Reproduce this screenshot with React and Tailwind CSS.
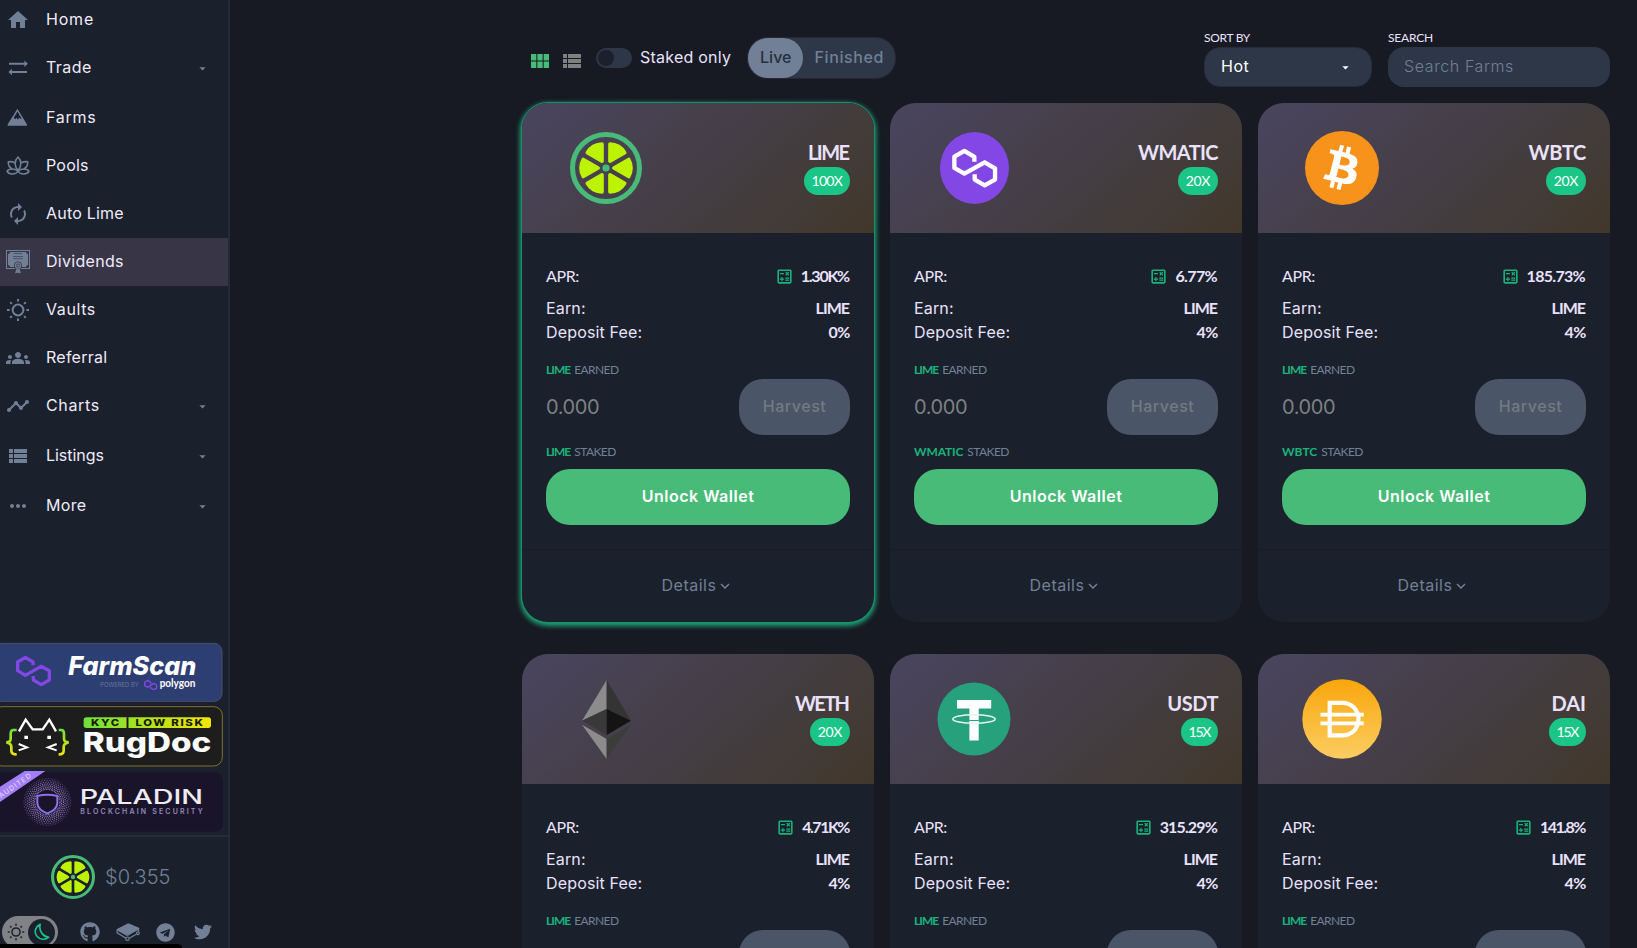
import React from 'react';
import {
  MdHome, MdAutorenew, MdGroups, MdTimeline, MdViewList, MdMoreHoriz, MdViewModule,
  MdArrowDropDown, MdOutlineCalculate, MdKeyboardArrowDown,
} from 'react-icons/md';
import { FaGithub, FaTelegram, FaTwitter, FaBitcoin } from 'react-icons/fa';

/* ---------- navigation icons ---------- */

const TradeIcon = () => (
  <svg viewBox="0 0 24 24" className="h-6 w-6" fill="currentColor">
    <path d="M3 6.700h15.400V4.400l3.500 3.300-3.500 3.300V8.700H3zM21 15.100H5.900v-2.400l-3.500 3.300 3.500 3.300v-2.300H21z" />
  </svg>
);

const FarmsIcon = () => (
  <svg viewBox="0 0 24 24" className="h-6 w-6" fill="currentColor">
    <path fillRule="evenodd" d="M11.400 2.800 21 18.400q.4 1.400-.9 1.400H2.500q-1.300 0-.9-1.400ZM11.400 5.600 7.700 12l1.500 1.300 1.300-1.500 1.300 1.700 1.500-1.700 1.600 1.300.7-.6Z" />
  </svg>
);

const PoolsIcon = () => (
  <svg viewBox="0 0 24 24" className="h-6 w-6" fill="none" stroke="currentColor" strokeWidth="1.600" strokeLinejoin="round">
    <path d="M12 3C8.300 6.500 8 12 12 16.500 16 12 15.700 6.500 12 3Z" />
    <path d="M8.700 8.800C7 7.800 4.500 7.500 2.300 7.700c-.1 3.300 1.200 5.800 3.800 7.200M15.300 8.800c1.700-1 4.200-1.300 6.400-1.100.1 3.300-1.200 5.800-3.800 7.200" />
    <path d="M12 17C9 14.300 2.800 14.200 1 17.200c2 4 9 3.600 11-.2 2 3.800 9 4.200 11 .2-1.800-3-8-2.900-11-.2Z" />
  </svg>
);

const DividendsIcon = () => (
  <svg viewBox="0 0 24 24" className="h-6 w-6">
    <rect x="0.500" y="0.500" width="23" height="18" fill="none" stroke="currentColor" />
    <path d="M4 2h16q0 2 2 2v11q-2 0-2 2H4q0-2-2-2V4q2 0 2-2Z" fill="currentColor" />
    <path d="M8 3.500h8M7 6.500h10M7 8.700h10" stroke="#383547" strokeWidth=".8" opacity=".8" />
    <circle cx="12" cy="15.500" r="4" fill="#383547" />
    <circle cx="12" cy="15.500" r="3.200" fill="currentColor" />
    <circle cx="12" cy="15.500" r="1.600" fill="none" stroke="#383547" strokeWidth=".8" />
    <path d="m10.500 18.500-1.500 5 1.700-.8 1 .8.500-4.500M13.500 18.500l1.500 5-1.700-.8-1 .8-.5-4.500" fill="currentColor" />
  </svg>
);

const SunIcon = ({ className }) => (
  <svg viewBox="0 0 24 24" className={className} fill="none" stroke="currentColor" strokeWidth="2">
    <circle cx="12" cy="12" r="5.400" />
    <path d="M12 1v2.600M12 20.400V23M1 12h2.600M20.400 12H23M4.200 4.200 5.900 5.900M18.100 18.100l1.700 1.700M4.200 19.800l1.700-1.700M18.100 5.900l1.700-1.700" />
  </svg>
);

const GitbookIcon = () => (
  <svg viewBox="0 0 24 18" className="h-[18px] w-6" fill="currentColor">
    <path d="M13 .6 23 4.700q.9.500 0 1L12.500 11.500q-1.200.6-2.400 0L1 6.900q-.7-.6 0-1L11.700.6q.6-.3 1.300 0Z" />
    <path
      d="M1.200 6.800v3.100L10 15.200M13.400 15.200 20.600 11M2 7.200l8 4.600q1.200.6 2.400 0L22.500 6v2.600"
      fill="none" stroke="currentColor" strokeWidth="1.300"
    />
    <circle cx="11.500" cy="15.700" r="1.700" fill="none" stroke="currentColor" strokeWidth="1.200" />
    <circle cx="21.900" cy="10.200" r="1.400" fill="none" stroke="currentColor" strokeWidth="1.200" />
  </svg>
);

const MoonIcon = () => (
  <svg viewBox="0 0 16 18" className="h-[18px] w-4" fill="none" stroke="currentColor" strokeWidth="1.600" strokeLinejoin="round">
    <path d="M6.200 1.200C1.500 3.500-.3 9 2.800 13c3 4 8.500 4.300 12 1.200C10.500 14.200 4.200 9 6.200 1.200Z" />
  </svg>
);

/* ---------- token logos ---------- */

const LimeLogo = ({ className }) => (
  <svg viewBox="0 0 100 100" className={className}>
    <circle cx="50" cy="50" r="46.500" fill="none" stroke="#48bb78" strokeWidth="7" />
    <g transform="translate(50 50)" fill="#bdf200" stroke="#bdf200" strokeWidth="5" strokeLinejoin="round">
      {[0, 60, 120, 180, 240, 300].map((a) => (
        <path key={a} transform={`rotate(${a})`} d="M11 0 31.500-11.800Q34.800-6 34.800 0T31.500 11.800Z" />
      ))}
    </g>
    <circle cx="50" cy="50" r="5" fill="#48bb78" />
  </svg>
);

const MaticLogo = () => (
  <svg viewBox="0 0 69 72" className="h-[72px] w-[69px]">
    <ellipse cx="34.500" cy="36" rx="34.500" ry="36" fill="#8247e5" />
    <path
      transform="translate(-59.300 -41.700) scale(.3333)"
      d="M281 214V200L251 182 221 199V233L251 250 312 216 343 234V268L312 285 282 268V252"
      fill="none" stroke="#fff" strokeWidth="13" strokeLinejoin="round"
    />
  </svg>
);

const BtcLogo = () => (
  <div className="flex h-[74px] w-[74px] items-center justify-center rounded-full bg-[radial-gradient(circle,#fff_60%,#f7931a_61%)]">
    <FaBitcoin className="h-[74px] w-[74px] text-[#f7931a]" />
  </div>
);

const EthLogo = () => (
  <svg viewBox="215 118 147 237" className="h-[79px] w-[49px]">
    <path d="M289 118 215 240 289 205Z" fill="#8c8c8c" />
    <path d="M289 118 362 240 289 205Z" fill="#343434" />
    <path d="M215 240 289 205V283Z" fill="#393939" />
    <path d="M362 240 289 205V283Z" fill="#141414" />
    <path d="M215 252 289 295V355Z" fill="#8c8c8c" />
    <path d="M362 252 289 295V355Z" fill="#3c3c3b" />
  </svg>
);

const UsdtLogo = () => (
  <svg viewBox="-37 -37 74 74" className="h-[74px] w-[74px]">
    <circle r="36.500" fill="#26a17b" />
    <path d="M-17-19H17.200V-10.500H4.700V21.600H-4.600V-10.500H-17Z" fill="#fff" />
    <ellipse rx="21.200" ry="4.300" fill="none" stroke="#e6f5f0" strokeWidth="1.500" />
    <path d="M-4.600 1.500H4.700" stroke="#26a17b" strokeWidth="1" />
  </svg>
);

const DaiLogo = () => (
  <svg viewBox="-40 -40 80 80" className="h-20 w-20">
    <defs>
      <linearGradient id="dai" x1="0" x2="0" y1="0" y2="1">
        <stop offset="0" stopColor="#f9a60a" />
        <stop offset="1" stopColor="#fbcd62" />
      </linearGradient>
    </defs>
    <circle r="39.700" fill="url(#dai)" />
    <path d="M-12.300-16.200H0C22-16.200 22 16.400 0 16.400H-12.300Z" fill="none" stroke="#fff" strokeWidth="4.200" />
    <path d="M-21.500-4.400H21.800M-21.500 4.400H21.800" stroke="#fff" strokeWidth="3.700" />
  </svg>
);

/* ---------- sidebar ---------- */

const NAV = [
  { label: 'Home', icon: <MdHome size={24} />, row: 'h-11 pb-1', track: 'tracking-[0.8px]' },
  { label: 'Trade', icon: <TradeIcon />, row: 'h-[50px] pb-0.5', track: 'tracking-[0.45px]', more: true },
  { label: 'Farms', icon: <FarmsIcon />, row: 'h-12', track: 'tracking-[0.7px]' },
  { label: 'Pools', icon: <PoolsIcon />, row: 'h-12', track: 'tracking-[0.2px]' },
  { label: 'Auto Lime', icon: <MdAutorenew size={24} />, row: 'h-12', track: 'tracking-[0.2px]' },
  { label: 'Dividends', icon: <DividendsIcon />, row: 'h-12 bg-[#383547]', track: 'tracking-[0.3px]' },
  { label: 'Vaults', icon: <SunIcon className="h-6 w-6" />, row: 'h-12', track: 'tracking-[0.6px]' },
  { label: 'Referral', icon: <MdGroups size={24} />, row: 'h-12', track: 'tracking-[0.25px]' },
  { label: 'Charts', icon: <MdTimeline size={24} />, row: 'h-[50px] pb-0.5', track: 'tracking-[0.65px]', more: true },
  { label: 'Listings', icon: <MdViewList size={24} />, row: 'h-[50px] pb-0.5', track: 'tracking-[-0.05px]', more: true },
  { label: 'More', icon: <MdMoreHoriz size={24} />, row: 'h-[50px] pb-0.5', track: 'tracking-[0.3px]', more: true },
];

const FarmScanBanner = () => (
  <svg viewBox="0 36 669 183" className="block h-[61px] w-[223px]">
    <rect x="-20" y="40" width="686" height="174" rx="24" fill="#2d3e73" stroke="#46506e" strokeWidth="3" />
    <path d="M99 106V96L76 82 53 96V122L76 136 123 109 148 122V150L124 164 100 150V138" fill="none" stroke="#8247e5" strokeWidth="10" strokeLinejoin="round" />
    <text x="205" y="136" textLength="384" lengthAdjust="spacingAndGlyphs" className="fill-white font-['Inter',sans-serif] text-[78px] font-extrabold italic">FarmScan</text>
    <text x="301" y="171" textLength="115" lengthAdjust="spacingAndGlyphs" className="fill-[#69779c] font-['Inter',sans-serif] text-[17px]">POWERED BY</text>
    <path d="M452 161V157L443 151 434 157V167L443 172 461 160 470 165V175L461 179 452 174V170" fill="none" stroke="#8247e5" strokeWidth="4" strokeLinejoin="round" />
    <text x="479" y="171" textLength="107" lengthAdjust="spacingAndGlyphs" className="fill-white font-['Lato',sans-serif] text-[31px] font-bold">polygon</text>
  </svg>
);

const RugDocBanner = () => (
  <svg viewBox="0 225 669 189" className="block h-[63px] w-[223px]">
    <defs>
      <linearGradient id="risk" x1="0" x2="1" y1="0" y2="0">
        <stop offset="0" stopColor="#6edf3c" />
        <stop offset="1" stopColor="#f5e400" />
      </linearGradient>
      <linearGradient id="brace" gradientUnits="userSpaceOnUse" x1="0" x2="0" y1="298" y2="376">
        <stop offset="0" stopColor="#6edf3c" />
        <stop offset="1" stopColor="#f5e400" />
      </linearGradient>
    </defs>
    <rect x="-20" y="230" width="687" height="178" rx="26" fill="#1d1d1d" stroke="#83702f" strokeWidth="3" />
    <path d="M57 304 77 269 98 298H128L148 269 168 304" fill="none" stroke="#fff" strokeWidth="7" />
    <path d="M50 300H40Q32 300 32 312V326Q32 336 19 337 33 339 34 350V362Q34 373 50 373M176 300H184Q192 300 192 312V326Q192 336 206 337 192 339 191 350V362Q191 373 176 373" fill="none" stroke="url(#brace)" strokeWidth="8" />
    <path d="M73 317h11v10H73zM142 317h11v10h-11z" fill="#fff" />
    <path d="M56 342 81 352 56 361M170 342 144 352 170 361" fill="none" stroke="#fff" strokeWidth="6" />
    <rect x="251" y="262" width="382" height="32" rx="8" fill="url(#risk)" />
    <text x="273" y="288" textLength="341" lengthAdjust="spacingAndGlyphs" className="fill-[#151a08] font-['Inter',sans-serif] text-[27px] font-extrabold tracking-[4px]">KYC | LOW RISK</text>
    <text x="248" y="367" textLength="386" lengthAdjust="spacingAndGlyphs" className="fill-white font-['Inter',sans-serif] text-[80px] font-extrabold">RugDoc</text>
  </svg>
);

/* radius and dot size of each ring around the shield */
const PALADIN_DOTS = [
  [38, 3.600], [43, 4], [48.500, 4.200], [54, 4], [59.500, 3.600], [65, 3], [70, 2.200],
];

const PaladinBanner = () => (
  <svg viewBox="0 420 669 189" className="block h-[63px] w-[223px]">
    <rect x="-20" y="427" width="689" height="178" rx="24" fill="#1a142b" />
    <path d="M0 470 74 423H136L0 516Z" fill="#a27ff8" />
    <text transform="translate(3 505) rotate(-35)" textLength="112" className="fill-[#e6dcff] font-['Inter',sans-serif] text-[21px]">AUDITED</text>
    {PALADIN_DOTS.map(([r, w], i) => (
      <circle
        key={r} cx="142" cy="516" r={r} fill="none" stroke="#b39be8" strokeWidth={w} pathLength="96"
        strokeDasharray="1 1" strokeDashoffset={i % 2} opacity={0.9 - i * 0.08}
      />
    ))}
    <path d="M112 498Q142 490 172 498V520Q170 540 142 550 114 540 112 520Z" fill="#1a142b" stroke="#8f70e6" strokeWidth="6" strokeLinejoin="round" />
    <text x="239" y="523" textLength="370" lengthAdjust="spacingAndGlyphs" className="fill-[#eeecf2] font-['Inter',sans-serif] text-[60px] font-medium">PALADIN</text>
    <text x="241" y="551" textLength="367" className="fill-[#9388b8] font-['Inter',sans-serif] text-[21px] font-semibold">BLOCKCHAIN SECURITY</text>
  </svg>
);

const Sidebar = () => (
  <aside className="flex h-full w-[230px] shrink-0 flex-col border-r-2 border-[#242b38] bg-[#1a202c]">
    <nav className="flex flex-col">
      {NAV.map((n) => (
        <a key={n.label} className={`flex items-center pl-1.5 ${n.row}`}>
          <span className="text-[#718096]">{n.icon}</span>
          <span className={`ml-4 flex-1 pb-0.5 text-base text-[#f0ebfa] ${n.track}`}>{n.label}</span>
          {n.more && <MdArrowDropDown size={15} className="mr-[18px] text-[#718096]" />}
        </a>
      ))}
    </nav>
    <div className="mt-auto flex flex-col gap-0.5">
      <FarmScanBanner />
      <RugDocBanner />
      <PaladinBanner />
    </div>
    <div className="relative mt-0.5 flex h-[113px] shrink-0 flex-col overflow-hidden border-t-2 border-[#252d3a]">
      <div className="mt-[18px] flex items-center pl-[51px]">
        <LimeLogo className="h-11 w-11" />
        <span className="ml-[10px] text-xl font-light text-[#718096]">$0.355</span>
      </div>
      <div className="mt-[17px] flex items-center text-[#718096]">
        <div className="ml-0.5 flex h-8 w-14 shrink-0 items-center justify-between rounded-full bg-[#808285] pr-[3px] pl-[5px] text-[#1a202c]">
          <SunIcon className="h-[18px] w-[18px]" />
          <span className="flex h-[27px] w-[27px] items-center justify-center rounded-full bg-[#1a202c] text-[#1bc587]">
            <MoonIcon />
          </span>
        </div>
        <FaGithub size={20} className="ml-[22px]" />
        <span className="ml-4"><GitbookIcon /></span>
        <FaTelegram size={19} className="ml-[16px]" />
        <FaTwitter size={18} className="ml-[19px]" />
      </div>
      <div className="absolute bottom-0 left-0 h-1 w-[182px] rounded-tr bg-black" />
    </div>
  </aside>
);

/* ---------- toolbar ---------- */

const Toolbar = () => (
  <div className="flex h-[87px] shrink-0 items-end justify-between">
    <div className="mb-2 flex h-[42px] items-center pl-[6px]">
      <MdViewModule size={24} className="mt-[5px] text-[#48bb78]" />
      <MdViewList size={24} className="mt-[5px] ml-2 text-[#808080]" />
      <div className="ml-3 flex h-5 w-9 items-center rounded-full bg-[#2d3748] px-0.5">
        <span className="h-4 w-4 rounded-full bg-[#1a202c]" />
      </div>
      <span className="ml-2 pb-0.5 text-base tracking-[0.24px] text-[#eae2fc]">Staked only</span>
      <div className="ml-4 flex h-[42px] w-[149px] rounded-[20px] border border-[#2a2634] bg-[#2d3748] text-base font-medium">
        <span className="flex w-[55px] items-center justify-center rounded-full bg-[#718096] pb-0.5 text-[#27303f]">Live</span>
        <span className="flex flex-1 items-center justify-center pb-0.5 tracking-[0.6px] text-[#718096]">Finished</span>
      </div>
    </div>
    <div className="flex gap-4">
      <div className="flex w-[168px] flex-col">
        <span className="font-['Lato','Inter',sans-serif] text-xs leading-[18px] tracking-[-0.3px] text-[#eae2fc]">SORT BY</span>
        <div className="flex h-10 items-center justify-between rounded-[16px] border border-[#2b2a3a] bg-[#2d3748] pr-[18px] pl-4 text-base tracking-[0.5px] text-white">
          <span className="pb-0.5">Hot</span>
          <MdArrowDropDown size={15} />
        </div>
      </div>
      <div className="flex w-[222px] flex-col">
        <span className="font-['Lato','Inter',sans-serif] text-xs leading-[18px] tracking-[-0.2px] text-[#eae2fc]">SEARCH</span>
        <div className="flex h-10 items-center rounded-[16px] bg-[#2d3748] px-4 pb-0.5 text-base font-light tracking-[0.6px] text-[#718096]">
          Search Farms
        </div>
      </div>
    </div>
  </div>
);

/* ---------- farm cards ---------- */

const FARMS = [
  { name: 'LIME', logo: <LimeLogo className="h-[72px] w-[72px]" />, mult: '100X', apr: '1.30K%', fee: '0%', nameTrack: '-tracking-[1.6px] pr-[1.6px]', multTrack: '-tracking-[0.75px]', aprTrack: '-tracking-[1.25px]', stakedTrack: '-tracking-[0.95px]', active: true },
  { name: 'WMATIC', logo: <MaticLogo />, mult: '20X', apr: '6.77%', fee: '4%', nameTrack: '-tracking-[0.6px]', multTrack: '-tracking-[0.35px]', aprTrack: '-tracking-[0.65px]', stakedTrack: '-tracking-[0.15px]' },
  { name: 'WBTC', logo: <BtcLogo />, mult: '20X', apr: '185.73%', fee: '4%', nameTrack: '-tracking-[0.35px]', multTrack: '-tracking-[0.35px]', aprTrack: '-tracking-[0.7px]', stakedTrack: 'tracking-normal' },
  { name: 'WETH', logo: <EthLogo />, mult: '20X', apr: '4.71K%', fee: '4%', nameTrack: '-tracking-[1.6px] pr-[1.6px]', multTrack: '-tracking-[0.35px]', aprTrack: '-tracking-[1.5px]', stakedTrack: 'tracking-normal' },
  { name: 'USDT', logo: <UsdtLogo />, mult: '15X', apr: '315.29%', fee: '4%', nameTrack: '-tracking-[0.45px]', multTrack: '-tracking-[1.3px]', aprTrack: '-tracking-[0.85px]', stakedTrack: 'tracking-normal' },
  { name: 'DAI', logo: <DaiLogo />, mult: '15X', apr: '141.8%', fee: '4%', nameTrack: 'tracking-normal', multTrack: '-tracking-[1.3px]', aprTrack: '-tracking-[1.5px]', stakedTrack: 'tracking-normal' },
];

const CAPS = "font-['Lato','Inter',sans-serif]";

const FarmCard = ({ farm }) => (
  <article
    className={`flex h-[519px] w-[352px] flex-col overflow-hidden rounded-[26px] bg-[#1a202c] text-base text-[#eae2fc] ${
      farm.active ? 'shadow-[0_0_0_1px_#1a9069,0_2px_5px_2px_#1ba877]' : ''
    }`}
  >
    <header className="flex h-[130px] items-center justify-between bg-[linear-gradient(139deg,#49455f_0%,#453e46_50%,#433c3b_72%,#42372a_100%)] pr-6 pl-11">
      <div className="flex h-20 w-20 items-center justify-center">{farm.logo}</div>
      <div className={`flex flex-col items-end gap-1 ${CAPS}`}>
        <h2 className={`text-xl leading-[22px] font-bold ${farm.nameTrack}`}>{farm.name}</h2>
        <span className={`flex h-7 min-w-[37px] items-center justify-center rounded-full bg-[#1bc587] px-2 text-sm text-white ${farm.multTrack}`}>{farm.mult}</span>
      </div>
    </header>
    <div className="flex flex-col px-6 pt-8">
      <div className="mb-2 flex h-6 items-center justify-between pb-0.5">
        <span className={`${CAPS} -tracking-[0.4px]`}>APR:</span>
        <span className={`flex items-center gap-[7px] pr-px font-bold ${CAPS} ${farm.aprTrack}`}>
          <MdOutlineCalculate size={19} className="text-[#1bb37a]" />
          {farm.apr}
        </span>
      </div>
      <div className="flex h-6 items-center justify-between pb-0.5">
        <span className="tracking-[0.15px]">Earn:</span>
        <span className={`pr-px font-bold -tracking-[1px] ${CAPS}`}>LIME</span>
      </div>
      <div className="flex h-6 items-center justify-between pb-0.5">
        <span className="tracking-[0.16px]">Deposit Fee:</span>
        <span className={`font-bold -tracking-[0.5px] ${CAPS}`}>{farm.fee}</span>
      </div>
      <div className={`mt-4 flex h-[18px] items-center gap-1 text-xs ${CAPS}`}>
        <span className="font-bold -tracking-[0.95px] text-[#1bb37a]">LIME</span>
        <span className="-tracking-[0.6px] text-[#718096]">EARNED</span>
      </div>
      <div className="flex items-center justify-between">
        <span className="text-xl -tracking-[0.4px] text-[#7d8082]">0.000</span>
        <button className="h-14 w-[111px] rounded-3xl bg-[#4a5568] pb-0.5 text-base font-medium tracking-[0.55px] text-[#747a7f]">Harvest</button>
      </div>
      <div className={`mt-2 flex h-[18px] items-center gap-1 text-xs ${CAPS}`}>
        <span className={`font-bold text-[#1bb37a] ${farm.stakedTrack}`}>{farm.name}</span>
        <span className="-tracking-[0.55px] text-[#718096]">STAKED</span>
      </div>
      <button className="mt-2 h-14 rounded-3xl bg-[#48bb78] pb-0.5 text-base font-semibold tracking-[0.5px] text-white">Unlock Wallet</button>
    </div>
    <footer className="mt-6 flex flex-1 items-center justify-center border-t border-[#161b26] pb-0.5 text-base text-[#718096]">
      <span className="tracking-[0.5px]">Details</span>
      <MdKeyboardArrowDown size={18} className="mt-0.5" />
    </footer>
  </article>
);

export default function App() {
  return (
    <div className="flex h-screen w-full overflow-hidden bg-[#171923] font-['Inter',sans-serif]">
      <Sidebar />
      <main className="flex min-w-0 flex-1 flex-col pr-[27px] pl-[292px]">
        <Toolbar />
        <section className="mt-4 grid grid-cols-3 gap-x-4 gap-y-8">
          {FARMS.map((f) => (
            <FarmCard key={f.name} farm={f} />
          ))}
        </section>
      </main>
    </div>
  );
}
